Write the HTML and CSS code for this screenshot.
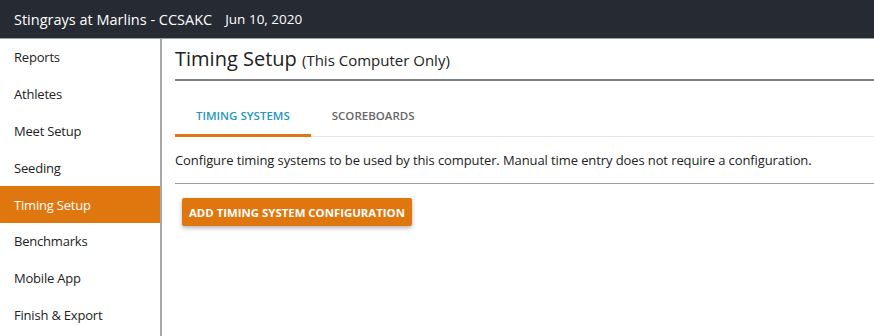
FILE: index.html
```html
<!DOCTYPE html>
<html lang="en">
<head>
  <meta charset="UTF-8">
  <meta name="viewport" content="width=device-width, initial-scale=1.0">
  <title>Timing Setup</title>
  <link rel="stylesheet" href="styles.css">
</head>
<body>
  <!-- Top bar -->
  <header class="top-bar">
    <span class="meet-name">Stingrays at Marlins - CCSAKC</span>
    <span class="meet-date">Jun 10, 2020</span>
  </header>

  <div class="app-body">
    <nav class="side-nav">
      <a class="nav-item" href="#">Reports</a>
      <a class="nav-item" href="#">Athletes</a>
      <a class="nav-item" href="#">Meet Setup</a>
      <a class="nav-item" href="#">Seeding</a>
      <a class="nav-item active" href="#">Timing Setup</a>
      <a class="nav-item" href="#">Benchmarks</a>
      <a class="nav-item" href="#">Mobile App</a>
      <a class="nav-item" href="#">Finish &amp; Export</a>
    </nav>

    <main class="main-content">
      <h1 class="page-title">Timing Setup <small>(This Computer Only)</small></h1>

      <div class="tabs">
        <div class="tab active">Timing Systems</div>
        <div class="tab">Scoreboards</div>
      </div>

      <p class="description">Configure timing systems to be used by this computer. Manual time entry does not require a configuration.</p>
      <hr class="divider">

      <button class="add-button">Add Timing System Configuration</button>
    </main>
  </div>
</body>
</html>
```

FILE: styles.css
```css
/* Layout */
body {
  font-family: "Open Sans", Arial, sans-serif;
  margin: 0;
  color: #222;
  background-color: white;
}
.top-bar {
  height: 39px;
  background-color: #262a33;
  border-bottom: 1px solid #9a9ea6;
  color: white;
  display: flex;
  align-items: center;
  padding-left: 14px;
  box-sizing: border-box;
}
.meet-name {
  font-size: 14.5px;
  margin-right: 13px;
}
.meet-date {
  font-size: 13.5px;
}
.app-body {
  display: flex;
  height: 297px;
}
.side-nav {
  width: 160px;
  border-right: 2px solid #a8a8a8;
  display: flex;
  flex-direction: column;
}
.nav-item {
  height: 36.8px;
  display: flex;
  align-items: center;
  padding-left: 14px;
  font-size: 13px;
  letter-spacing: -0.2px;
  color: #222;
  text-decoration: none;
}
.nav-item.active {
  background-color: #e0760e;
  color: white;
}
.main-content {
  flex: 1;
  padding-left: 13px;
}
.page-title {
  margin: 0;
  font-size: 20px;
  font-weight: normal;
  color: #222;
  padding: 8px 0 7px 0;
  border-bottom: 2px solid #7c8088;
  line-height: 24px;
}
.page-title small {
  font-size: 15px;
}
.tabs {
  display: flex;
  margin-top: 17px;
  border-bottom: 1px solid #e4e4e4;
}
.tab {
  padding: 10px 21px 11px 21px;
  font-size: 11.5px;
  font-weight: 600;
  text-transform: uppercase;
  color: #666;
  border-bottom: 3px solid transparent;
  margin-bottom: -1px;
}
.tab.active {
  color: #2596be;
  border-bottom-color: #e0760e;
}
.description {
  font-size: 13px;
  letter-spacing: -0.1px;
  margin: 14px 0 0 0;
  color: #222;
}
.divider {
  border: none;
  border-top: 1px solid #999ca4;
  margin: 14px 0 0 0;
}
.add-button {
  margin: 14px 0 0 7px;
  background-color: #e0760e;
  color: white;
  border: none;
  border-radius: 2px;
  padding: 0 7px;
  height: 28px;
  font-family: inherit;
  font-size: 11.4px;
  font-weight: 700;
  text-transform: uppercase;
  box-shadow: 0 2px 4px rgba(0, 0, 0, 0.3);
  cursor: pointer;
}
```
